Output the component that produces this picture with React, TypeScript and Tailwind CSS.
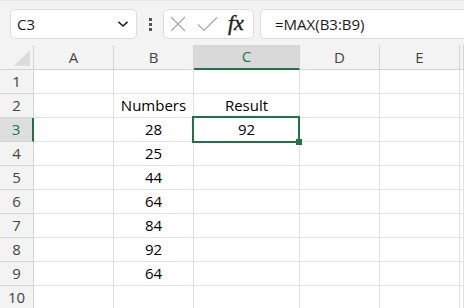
import React from "react";

const cols = ["A", "B", "C", "D", "E", ""];
const data: Record<number, { B?: string; C?: string }> = {
  2: { B: "Numbers", C: "Result" },
  3: { B: "28", C: "92" },
  4: { B: "25" },
  5: { B: "44" },
  6: { B: "64" },
  7: { B: "84" },
  8: { B: "92" },
  9: { B: "64" },
};

export default function App() {
  const rows = [1, 2, 3, 4, 5, 6, 7, 8, 9, 10];
  return (
    <div
      className="w-[464px] h-[308px] overflow-hidden bg-white flex flex-col"
      style={{ fontFamily: '"Open Sans", "Noto Sans", sans-serif' }}
    >
      {/* Toolbar */}
      <div className="h-[45px] shrink-0 bg-[#f3f3f3] flex items-start pt-[8px] pl-[10px] gap-0 border-t border-[#e8e8e8]">
        <div className="w-[127px] h-[30px] bg-white border border-[#dcdcdc] rounded-[5px] flex items-center pl-[6px] pr-[6px] justify-between">
          <span className="text-[15px] text-[#1a1a1a] leading-none">C3</span>
          <svg width="12" height="8" viewBox="0 0 12 8" className="mr-[1px]">
            <path d="M1.5 1.8 L6 6 L10.5 1.8" fill="none" stroke="#222" strokeWidth="1.6" />
          </svg>
        </div>
        <div className="w-[26px] h-[30px] flex flex-col items-center justify-center gap-[2px]">
          <div className="w-[3px] h-[3px] bg-[#555]" />
          <div className="w-[3px] h-[3px] bg-[#555]" />
          <div className="w-[3px] h-[3px] bg-[#555]" />
        </div>
        <div className="w-[91px] h-[30px] bg-white border border-[#dcdcdc] rounded-[5px] flex items-center pl-[6px]">
          <svg width="16" height="16" viewBox="0 0 16 16" className="shrink-0">
            <path d="M1 1 L15 15 M15 1 L1 15" stroke="#a8a8a8" strokeWidth="1.2" fill="none" />
          </svg>
          <svg width="21" height="16" viewBox="0 0 21 16" className="ml-[11px] shrink-0">
            <path d="M1 8.5 L7 14.5 L20 1.5" stroke="#a8a8a8" strokeWidth="1.2" fill="none" />
          </svg>
          <span
            className="ml-[10px] text-[22px] italic text-[#222] leading-none -mt-[3px]"
            style={{ fontFamily: '"Liberation Serif", "DejaVu Serif", serif', WebkitTextStroke: "0.4px #222" }}
          >
            fx
          </span>
        </div>
        <div className="ml-[6px] flex-1 h-[30px] bg-white border border-[#dcdcdc] rounded-l-[5px] border-r-0 flex items-center pl-[14px]">
          <span className="text-[15px] text-[#1a1a1a] leading-none">=MAX(B3:B9)</span>
        </div>
      </div>

      {/* Grid */}
      <div className="relative flex-1">
        <div className="grid grid-cols-[34px_80px_80px_106px_80px_80px_1fr] grid-rows-[25px_repeat(10,24px)]">
          {/* header row */}
          <div className="bg-[#f3f3f3] border-r border-b border-[#d4d4d4] relative">
            <svg width="17" height="16" viewBox="0 0 17 16" className="absolute left-[14px] top-[5px]">
              <polygon points="16,0 16,16 0,16" fill="#dcdcdc" />
            </svg>
          </div>
          {cols.map((c, i) =>
            c === "C" ? (
              <div
                key={i}
                className="bg-[#d9d9d9] border-r border-[#d4d4d4] border-b-2 border-b-[#217346] flex items-center justify-center text-[15px] text-[#217346]"
              >
                {c}
              </div>
            ) : (
              <div
                key={i}
                className="bg-[#f3f3f3] border-r border-b border-[#d4d4d4] flex items-center justify-center text-[15px] text-[#444]"
              >
                {c}
              </div>
            )
          )}
          {rows.map((r) => (
            <React.Fragment key={r}>
              {r === 3 ? (
                <div className="bg-[#dedede] border-r-2 border-r-[#217346] border-b border-b-[#d4d4d4] flex items-center justify-center text-[15px] text-[#217346]">
                  {r}
                </div>
              ) : (
                <div className="bg-[#f3f3f3] border-r border-b border-[#d4d4d4] flex items-center justify-center text-[15px] text-[#444]">
                  {r}
                </div>
              )}
              {cols.map((c, i) => {
                const v = (data[r] as any)?.[c] as string | undefined;
                return (
                  <div
                    key={i}
                    className="border-r border-b border-[#e1e1e1] flex items-center justify-center text-[15px] text-black"
                  >
                    {v ?? ""}
                  </div>
                );
              })}
            </React.Fragment>
          ))}
        </div>
        {/* selection */}
        <div className="absolute left-[192px] top-[71px] w-[108px] h-[27px] border-2 border-[#217346] pointer-events-none" />
        <div className="absolute left-[296px] top-[94px] w-[6px] h-[6px] bg-[#217346]" />
      </div>
    </div>
  );
}
